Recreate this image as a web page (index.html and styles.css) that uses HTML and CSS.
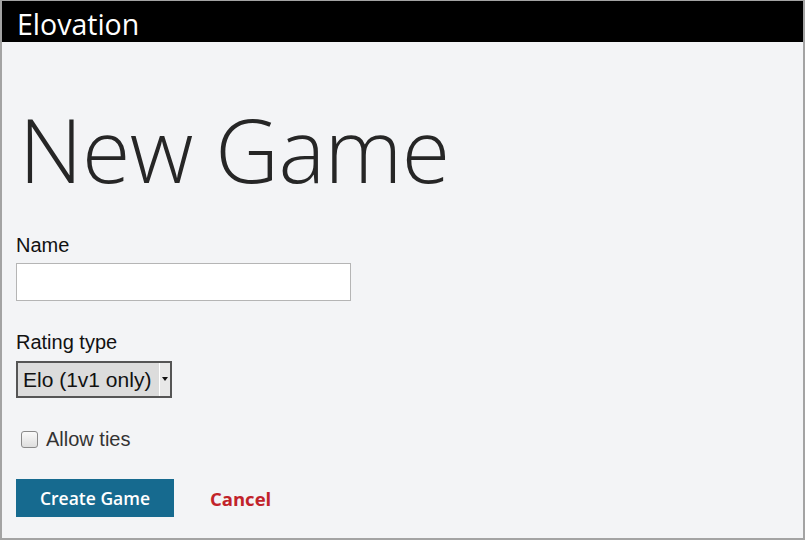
FILE: index.html
```html
<!DOCTYPE html>
<html lang="en">
<head>
    <meta charset="UTF-8">
    <meta name="viewport" content="width=device-width, initial-scale=1.0">
    <title>Elovation - New Game</title>
    <link rel="stylesheet" href="styles.css">
</head>
<body>
    <div class="frame">
        <div class="topbar">Elovation</div>
        <div class="content">
            <h1 class="page-title">New Game</h1>
            <form class="game-form">
                <label class="field-label" for="game-name">Name</label>
                <input class="text-input" type="text" id="game-name">

                <label class="field-label" for="rating-type">Rating type</label>
                <div class="select-box">
                    <span class="select-value">Elo (1v1 only)</span>
                    <span class="select-arrow"></span>
                </div>

                <label class="check-row">
                    <span class="checkbox"></span>
                    Allow ties
                </label>

                <div class="actions">
                    <button type="button" class="btn-create">Create Game</button>
                    <a href="#" class="cancel-link">Cancel</a>
                </div>
            </form>
        </div>
    </div>
</body>
</html>
```

FILE: styles.css
```css
body {
    margin: 0;
    background-color: #fff;
    font-family: "Liberation Sans", Arial, sans-serif;
}
.frame {
    width: 801px;
    height: 537px;
    border-left: 2px solid #a3a3a3;
    border-top: 1px solid #a3a3a3;
    border-right: 2px solid #a3a3a3;
    border-bottom: 2px solid #a3a3a3;
    background-color: #f3f4f6;
}
.topbar {
    height: 41px;
    background-color: #000;
    color: #fff;
    font-family: "Open Sans", sans-serif;
    font-size: 28.5px;
    line-height: 47px;
    padding-left: 15px;
}
.content {
    padding-left: 14px;
}
.page-title {
    margin: 0;
    padding-top: 57px;
    padding-left: 3px;
    font-family: "Open Sans", sans-serif;
    font-weight: 300;
    font-size: 88px;
    line-height: 100px;
    color: #262626;
    letter-spacing: -0.5px;
}
.game-form {
    margin-top: 35px;
}
.field-label {
    display: block;
    font-size: 20px;
    color: #111;
    line-height: 22px;
}
.text-input {
    display: block;
    box-sizing: border-box;
    width: 335px;
    height: 38px;
    margin: 7px 0 30px 0;
    border: 1px solid #b5b5b5;
    background-color: #fff;
}
.select-box {
    display: flex;
    box-sizing: border-box;
    width: 156px;
    height: 37px;
    margin-top: 8px;
    border: 2px solid #555;
    background-color: #dcdcdc;
}
.select-value {
    flex: 1;
    font-size: 21px;
    line-height: 33px;
    padding-left: 5px;
    color: #111;
    white-space: nowrap;
}
.select-arrow {
    width: 10px;
    border-left: 1px solid #fff;
    background-color: #e8e8e8;
    position: relative;
}
.select-arrow::after {
    content: "";
    position: absolute;
    left: 2px;
    top: 14px;
    border-left: 3px solid transparent;
    border-right: 3px solid transparent;
    border-top: 4px solid #111;
}
.check-row {
    display: flex;
    align-items: center;
    gap: 8px;
    margin-top: 30px;
    padding-left: 5px;
    font-size: 20px;
    color: #333;
}
.checkbox {
    width: 15px;
    height: 15px;
    border: 1px solid #8a8a8a;
    border-radius: 3px;
    background: linear-gradient(#fafafa, #dedede);
}
.actions {
    display: flex;
    align-items: center;
    gap: 36px;
    margin-top: 28px;
}
.btn-create {
    width: 158px;
    height: 38px;
    border: none;
    background-color: #166a8f;
    color: #fff;
    font-family: "Open Sans", sans-serif;
    font-weight: 600;
    font-size: 17.5px;
    cursor: pointer;
}
.cancel-link {
    color: #c1232a;
    font-family: "Open Sans", sans-serif;
    font-weight: 700;
    font-size: 18.5px;
    text-decoration: none;
}
```
